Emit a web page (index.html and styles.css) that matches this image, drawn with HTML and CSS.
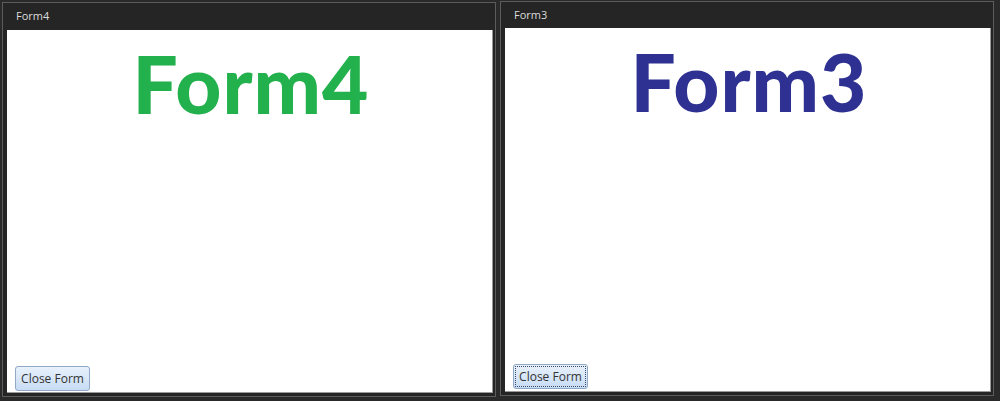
FILE: index.html
```html
<!DOCTYPE html>
<html lang="en">
<head>
    <meta charset="UTF-8">
    <title>Form4 / Form3</title>
    <link rel="stylesheet" href="styles.css">
</head>
<body>

    <div class="window form4">
        <div class="titlebar">Form4</div>
        <div class="client">
            <div class="big green">Form4</div>
            <button class="btn">Close Form</button>
        </div>
    </div>

    <div class="window form3">
        <div class="titlebar">Form3</div>
        <div class="client">
            <div class="big blue">Form3</div>
            <button class="btn focused">Close Form</button>
        </div>
    </div>

</body>
</html>
```

FILE: styles.css
```css
html, body {
    margin: 0;
    height: 401px;
    overflow: hidden;
}

body {
    background-color: #2a2a2a;
    display: flex;
    align-items: flex-start;
    gap: 4px;
    padding-left: 2px;
    font-family: "Open Sans", "Noto Sans", sans-serif;
}

/* window frame */
.window {
    width: 494px;
    height: 395px;
    box-sizing: border-box;
    border: 1px solid #5c5c5c;
    background-color: #252525;
    padding: 0 2px 3px 4px;
    display: flex;
    flex-direction: column;
}

.form4 {
    margin-top: 2px;
}

.form3 {
    margin-top: 1px;
}

.titlebar {
    height: 27px;
    line-height: 25px;
    padding-left: 9px;
    font-size: 11px;
    color: #dcdcdc;
}

.form3 .titlebar {
    height: 26px;
}

/* white form area */
.client {
    flex: 1;
    background-color: #fff;
    border-right: 1px solid #9a9a9a;
    border-bottom: 1px solid #9a9a9a;
    display: flex;
    flex-direction: column;
    justify-content: space-between;
    align-items: flex-start;
}

.big {
    align-self: stretch;
    text-align: center;
    font-family: Lato, "Open Sans", sans-serif;
    font-weight: 900;
    font-size: 80px;
    line-height: 80px;
    letter-spacing: 1px;
    padding-top: 13px;
    padding-left: 3px;
}

.green {
    color: #22b14c;
}

.blue {
    color: #2e3192;
}

/* Close Form button */
.btn {
    width: 75px;
    height: 25px;
    margin: 0 0 1px 8px;
    padding: 0;
    font-family: "Open Sans", "Noto Sans", sans-serif;
    font-size: 12px;
    color: #333;
    border: 1px solid #8fa9c7;
    border-radius: 3px;
    background: linear-gradient(#e8f1fc, #c8dcf4);
}

.form3 .btn {
    margin-bottom: 2px;
}

.focused {
    outline: 1px dotted #3a4a66;
    outline-offset: -3px;
}
```
